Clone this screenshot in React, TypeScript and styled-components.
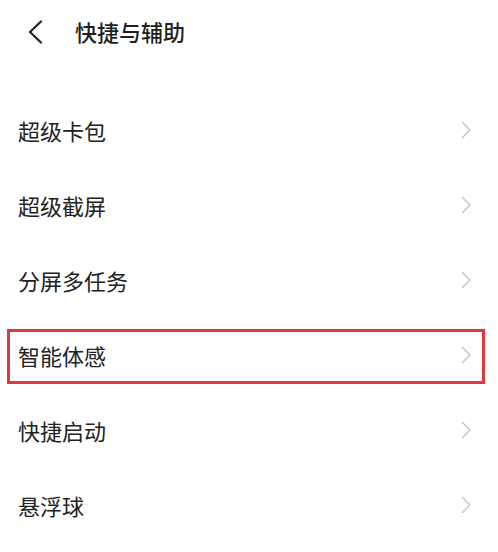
import React from 'react';
import styled, { createGlobalStyle } from 'styled-components';

const GlobalStyle = createGlobalStyle`
  html, body {
    margin: 0;
    padding: 0;
    background: #ffffff;
  }
  body {
    font-family: "Noto Sans CJK SC", "Noto Sans", sans-serif;
    color: #222222;
  }
`;

const items = ['超级卡包', '超级截屏', '分屏多任务', '智能体感', '快捷启动', '悬浮球'];
const highlighted = '智能体感';

const App = () => {
  return (
    <>
      <GlobalStyle />
      <StyledPage>
        <StyledHeader>
          <StyledBack aria-label="返回">
            <svg width="16" height="24" viewBox="0 0 16 24" fill="none">
              <path d="M14 1.5L3 12l11 10.5" stroke="#222" strokeWidth="2.2" strokeLinecap="round" strokeLinejoin="round" />
            </svg>
          </StyledBack>
          <StyledTitle>快捷与辅助</StyledTitle>
        </StyledHeader>
        <StyledList>
          {items.map((label) => (
            <StyledRow key={label}>
              <StyledLabel>{label}</StyledLabel>
              <svg width="11" height="18" viewBox="0 0 11 18" fill="none">
                <path d="M1.5 1.5L9 9l-7.5 7.5" stroke="#c9c9c9" strokeWidth="1.6" strokeLinecap="round" strokeLinejoin="round" />
              </svg>
              {label === highlighted && <StyledHighlight />}
            </StyledRow>
          ))}
        </StyledList>
      </StyledPage>
    </>
  );
};

export default App;

const StyledPage = styled.div`
  width: 498px;
  height: 552px;
  overflow: hidden;
  background: #ffffff;
`;

const StyledHeader = styled.header`
  height: 62px;
  display: flex;
  align-items: center;
  padding-left: 27px;
`;

const StyledBack = styled.div`
  width: 16px;
  height: 24px;
  display: flex;
  margin-right: 32px;
  margin-top: 2px;
`;

const StyledTitle = styled.h1`
  margin: 0;
  font-size: 22px;
  font-weight: 500;
  line-height: 1;
  color: #1f1f1f;
`;

const StyledList = styled.ul`
  list-style: none;
  margin: 0;
  padding: 30px 0 0;
`;

const StyledRow = styled.li`
  position: relative;
  height: 75px;
  display: flex;
  align-items: center;
  justify-content: space-between;
  padding: 0 26px 0 18px;
`;

const StyledLabel = styled.span`
  font-size: 22px;
  line-height: 1;
  color: #222222;
`;

const StyledHighlight = styled.div`
  position: absolute;
  left: 7px;
  width: 478px;
  top: 12px;
  height: 55px;
  box-sizing: border-box;
  border: 3px solid #dc3a3e;
  pointer-events: none;
`;
